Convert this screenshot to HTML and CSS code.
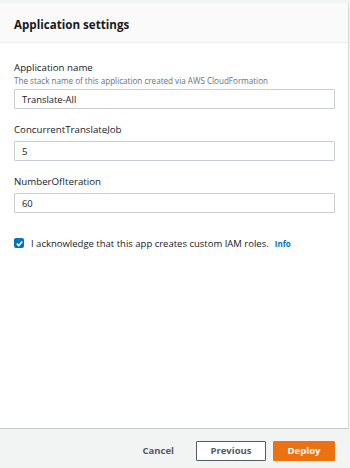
FILE: index.html
```html
<!DOCTYPE html>
<html lang="en">
<head>
    <meta charset="UTF-8">
    <meta name="viewport" content="width=device-width, initial-scale=1.0">
    <title>Application settings</title>
    <link rel="stylesheet" href="styles.css">
</head>
<body>
    <div class="page">
        <div class="panel">
            <div class="panel-header">
                <h2>Application settings</h2>
            </div>
            <div class="panel-body">
                <div class="field">
                    <label for="appName">Application name</label>
                    <div class="hint">The stack name of this application created via AWS CloudFormation</div>
                    <input type="text" id="appName" value="Translate-All">
                </div>
                <div class="field">
                    <label for="jobs">ConcurrentTranslateJob</label>
                    <input type="text" id="jobs" value="5">
                </div>
                <div class="field">
                    <label for="iter">NumberOfIteration</label>
                    <input type="text" id="iter" value="60">
                </div>
                <div class="ack">
                    <span class="check">
                        <svg width="9" height="9" viewBox="0 0 10 10"><path d="M2 5.2 L4.2 7.4 L8 2.8" fill="none" stroke="#fff" stroke-width="1.8"/></svg>
                    </span>
                    <span class="ack-text">I acknowledge that this app creates custom IAM roles.</span>
                    <a class="info" href="#">Info</a>
                </div>
            </div>
        </div>
        <div class="footer">
            <button class="btn-link">Cancel</button>
            <button class="btn-normal">Previous</button>
            <button class="btn-primary">Deploy</button>
        </div>
    </div>
</body>
</html>
```

FILE: styles.css
```css
body {
    margin: 0;
    font-family: 'Open Sans', sans-serif;
    color: #16191f;
    background: #f2f3f3;
}

.page {
    width: 350px;
    height: 468px;
    display: flex;
    flex-direction: column;
    padding-top: 3px;
    box-sizing: border-box;
    background: #f2f3f3;
}

.panel {
    height: 426px;
    box-sizing: border-box;
    background: #fff;
    margin-right: 1px;
    border-right: 1px solid #d5dbdb;
    border-bottom: 1px solid #c4c9c9;
    display: flex;
    flex-direction: column;
}

.panel-header {
    height: 40px;
    box-sizing: border-box;
    background: #fafafa;
    border-bottom: 1px solid #eaeded;
    padding: 4px 14px 0 14px;
    display: flex;
    align-items: center;
}

.panel-header h2 {
    margin: 0;
    font-size: 11.6px;
    font-weight: 700;
}

.panel-body {
    padding: 18px 14px 0 14px;
}

.field {
    margin-bottom: 14px;
}

label {
    display: block;
    font-size: 9.7px;
    line-height: 14px;
}

.hint {
    font-size: 8.1px;
    color: #687078;
    line-height: 12px;
    margin-bottom: -2px;
}

input {
    display: block;
    width: 321px;
    height: 20px;
    box-sizing: border-box;
    margin-top: 4px;
    padding: 0 7px;
    border: 1px solid #c9cdcf;
    border-radius: 1px;
    font-family: 'Open Sans', sans-serif;
    font-size: 9.4px;
    color: #16191f;
}

.panel-body .field:nth-child(3) {
    margin-bottom: 23px;
}

.ack {
    display: flex;
    align-items: center;
    height: 14px;
    font-size: 9.5px;
}

.check {
    width: 10px;
    height: 10px;
    background: #0073bb;
    border-radius: 2px;
    display: flex;
    align-items: center;
    justify-content: center;
    margin-right: 7px;
}

.info {
    color: #0073bb;
    font-weight: 700;
    font-size: 8px;
    text-decoration: none;
    margin-left: 6px;
}

.footer {
    flex: 1;
    display: flex;
    align-items: center;
    justify-content: flex-end;
    padding: 4px 15px 0 0;
    gap: 7px;
}

button {
    height: 20px;
    font-family: 'Open Sans', sans-serif;
    font-size: 9.5px;
    font-weight: 700;
    border-radius: 1px;
    cursor: pointer;
}

.btn-link {
    background: none;
    border: none;
    color: #545b64;
    margin-right: 9px;
}

.btn-normal {
    width: 70px;
    background: #fff;
    border: 1px solid #545b64;
    color: #545b64;
}

.btn-primary {
    width: 62px;
    background: #ec7211;
    border: 1px solid #ec7211;
    color: #fff;
}
```
